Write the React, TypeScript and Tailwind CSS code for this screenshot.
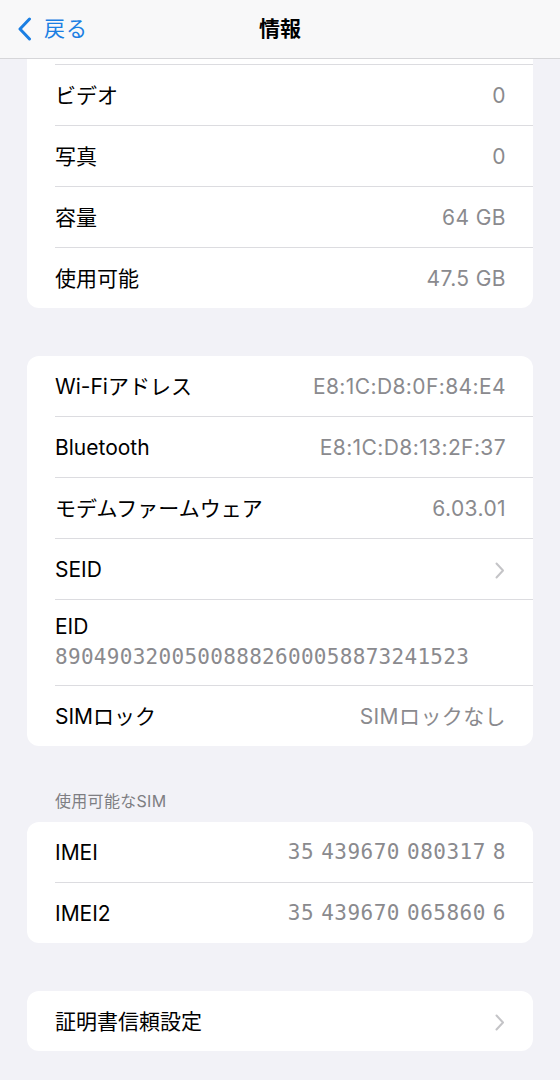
import React from 'react';

type Row = { label: string; value?: string; mono?: boolean; chevron?: boolean; stacked?: boolean };

const font = { fontFamily: 'Inter, "Noto Sans CJK JP", sans-serif' };
const mono = { fontFamily: '"DejaVu Sans Mono", monospace' };

function Chevron() {
  return (
    <svg width="10" height="17" viewBox="0 0 10 17" fill="none">
      <path d="M1.5 1.5 L8 8.5 L1.5 15.5" stroke="#c4c4c7" strokeWidth="2" strokeLinecap="round" strokeLinejoin="round" />
    </svg>
  );
}

function MonoNum({ text }: { text: string }) {
  const parts = text.split(' ');
  return (
    <span className="flex items-center tracking-[0.5px]">
      {parts.map((p, i) => (
        <span key={i} className={i > 0 ? 'ml-[7px]' : ''} style={mono}>
          {p}
        </span>
      ))}
    </span>
  );
}

function Sep() {
  return <div className="h-px ml-[28px] bg-[#dcdce0]" />;
}

function Item({ row }: { row: Row }) {
  if (row.stacked) {
    return (
      <div className="h-[85px] pl-[28px] pr-[27px] flex flex-col justify-center">
        <div className="text-[21px] leading-[26px] text-black">{row.label}</div>
        <div className="text-[21px] leading-[28px] text-[#8a8a8e] mt-[3px] tracking-[0.3px]" style={mono}>
          {row.value}
        </div>
      </div>
    );
  }
  return (
    <div className="h-[60px] pl-[28px] pr-[27px] pt-[2px] flex items-center justify-between">
      <span className="text-[21px] text-black">{row.label}</span>
      {row.chevron ? (
        <span className="mr-[1px]"><Chevron /></span>
      ) : row.mono ? (
        <span className="text-[21px] text-[#8a8a8e]"><MonoNum text={row.value || ''} /></span>
      ) : (
        <span className="text-[21px] text-[#8a8a8e] tracking-[0.4px]">{row.value}</span>
      )}
    </div>
  );
}

function Group({ rows, topCut }: { rows: Row[]; topCut?: boolean }) {
  return (
    <div className={'mx-[27px] bg-white ' + (topCut ? 'rounded-b-[12px]' : 'rounded-[12px]')}>
      {topCut && <div className="h-[5px]" />}
      {rows.map((r, i) => (
        <div key={r.label}>
          {(i > 0 || topCut) && <Sep />}
          <Item row={r} />
        </div>
      ))}
    </div>
  );
}

export default function App() {
  const media: Row[] = [
    { label: 'ビデオ', value: '0' },
    { label: '写真', value: '0' },
    { label: '容量', value: '64 GB' },
    { label: '使用可能', value: '47.5 GB' },
  ];
  const net: Row[] = [
    { label: 'Wi-Fiアドレス', value: 'E8:1C:D8:0F:84:E4' },
    { label: 'Bluetooth', value: 'E8:1C:D8:13:2F:37' },
    { label: 'モデムファームウェア', value: '6.03.01' },
    { label: 'SEID', chevron: true },
    { label: 'EID', value: '89049032005008882600058873241523', stacked: true },
    { label: 'SIMロック', value: 'SIMロックなし' },
  ];
  const sim: Row[] = [
    { label: 'IMEI', value: '35 439670 080317 8', mono: true },
    { label: 'IMEI2', value: '35 439670 065860 6', mono: true },
  ];

  return (
    <div className="w-[560px] h-[1080px] bg-[#f2f2f7] overflow-hidden" style={font}>
      <div className="h-[59px] bg-[#f8f8f9] border-b border-[#d6d6d9] flex items-center relative">
        <div className="flex items-center ml-[17px] text-[#1b7fe3]">
          <svg width="15" height="24" viewBox="0 0 15 24" fill="none">
            <path d="M12.5 2 L3 12 L12.5 22" stroke="#1b7fe3" strokeWidth="3" strokeLinecap="round" strokeLinejoin="round" />
          </svg>
          <span className="ml-[12px] text-[21px] tracking-[1px]">戻る</span>
        </div>
        <div className="absolute left-0 right-0 text-center text-[21px] font-bold text-black pointer-events-none">情報</div>
      </div>

      <Group rows={media} topCut />
      <div className="h-[48px]" />
      <Group rows={net} />
      <div className="mt-[45px] mb-[11px] h-[20px] pl-[55px] text-[16px] leading-[20px] text-[#7e7e83] tracking-[0.3px]">使用可能なSIM</div>
      <Group rows={sim} />
      <div className="h-[48px]" />
      <Group rows={[{ label: '証明書信頼設定', chevron: true }]} />
    </div>
  );
}
